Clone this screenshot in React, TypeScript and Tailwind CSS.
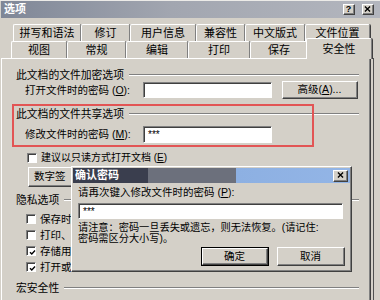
import React from 'react'

const tabsBack: [string, number][] = [
  ['拼写和语法', 68],
  ['修订', 49],
  ['用户信息', 66],
  ['兼容性', 49],
  ['中文版式', 60],
  ['文件位置', 65],
]

const tabsFront: [string, number][] = [
  ['视图', 56],
  ['常规', 59],
  ['编辑', 62],
  ['打印', 62],
  ['保存', 58],
  ['安全性', 62],
]

function Raised({ className = '', children }: { className?: string; children?: React.ReactNode }) {
  return (
    <div className={`border border-t-white border-l-white border-r-[#404040] border-b-[#404040] ${className}`}>
      <div className="h-full w-full border-r border-b border-[#808080] flex items-center justify-center">
        {children}
      </div>
    </div>
  )
}

function Sunken({ className = '', children }: { className?: string; children?: React.ReactNode }) {
  return (
    <div className={`border border-t-[#808080] border-l-[#808080] border-r-white border-b-white ${className}`}>
      <div className="h-full w-full border-t border-l border-[#404040] bg-white flex items-center pl-[3px] text-[10px] leading-none">
        {children}
      </div>
    </div>
  )
}

function CheckBox({ checked = false }: { checked?: boolean }) {
  return (
    <div className="w-[10px] h-[10px] shrink-0 border border-t-[#808080] border-l-[#808080] border-r-white border-b-white">
      <div className="h-full w-full border-t border-l border-[#404040] bg-white">
        {checked && (
          <svg viewBox="0 0 7 7" className="w-[7px] h-[7px] ml-[0.5px] mt-[0.5px]">
            <path d="M1 3.2 L2.8 5 L6 1.6" stroke="#000" strokeWidth="1.4" fill="none" />
          </svg>
        )}
      </div>
    </div>
  )
}

function Group({ title, className = '' }: { title: string; className?: string }) {
  return (
    <div className={`flex items-center h-[12px] ${className}`}>
      <span className="text-[10.8px] leading-none whitespace-nowrap">{title}</span>
      <div className="ml-[5px] flex-1 h-[2px] border-t border-t-[#808080] border-b border-b-white" />
    </div>
  )
}

function Tab({ label, width, selected = false }: { label: string; width: number; selected?: boolean }) {
  if (selected) {
    return (
      <div
        className="relative z-10 -mx-[2px] -mt-[3px] -mb-[1px] h-[21px] bg-[#d4d0c8] border-l border-t border-white rounded-t-[2px] border-r border-r-[#808080] shadow-[1px_0_0_#404040] flex items-center justify-center text-[11px] leading-none"
        style={{ width: width + 4 }}
      >
        {label}
      </div>
    )
  }
  return (
    <div
      className="h-[17px] border-l border-t border-white rounded-t-[2px] border-r border-r-[#808080] shadow-[1px_0_0_#404040] flex items-center justify-center text-[11px] leading-none pt-[1px]"
      style={{ width }}
    >
      {label}
    </div>
  )
}

// only the part left of the confirm dialog shows
function PrivacyRow({ label, checked = false }: { label: string; checked?: boolean }) {
  return (
    <div className="flex items-center h-[16px] pl-[10px]">
      <CheckBox checked={checked} />
      <span className="ml-[4px] text-[10.5px] leading-none whitespace-nowrap">{label}</span>
    </div>
  )
}

export default function App() {
  return (
    <div className="relative w-[380px] h-[300px] overflow-hidden bg-[#d4d0c8] text-black font-['Liberation_Sans','Noto_Sans_CJK_SC',sans-serif]">
      {/* title bar */}
      <div className="h-[1px] bg-[#ecebe8]" />
      <div className="ml-[1px] h-[17px] flex items-center justify-between pl-[3px] pr-[6px] bg-[linear-gradient(to_right,#7f8797,#a2a6b0_45%,#b3b6be)]">
        <span className="text-white text-[11px] font-bold leading-none">选项</span>
        <div className="flex gap-[7px]">
          <Raised className="w-[12px] h-[11px] bg-[#d4d0c8]">
            <span className="text-[9px] font-bold leading-none">?</span>
          </Raised>
          <Raised className="w-[12px] h-[11px] bg-[#d4d0c8]">
            <svg viewBox="0 0 8 7" className="w-[7px] h-[6px]">
              <path d="M1 0.5 L7 6.5 M7 0.5 L1 6.5" stroke="#000" strokeWidth="1.5" />
            </svg>
          </Raised>
        </div>
      </div>

      {/* tabs */}
      <div className="mt-[6px] flex pl-[13px]">
        {tabsBack.map(([l, w]) => (
          <Tab key={l} label={l} width={w} />
        ))}
      </div>
      <div className="flex pl-[11px]">
        {tabsFront.map(([l, w]) => (
          <Tab key={l} label={l} width={w} selected={l === '安全性'} />
        ))}
      </div>

      {/* panel */}
      <div className="ml-[1px] w-[369px] h-[260px] border-t border-l border-white border-r border-r-[#808080] shadow-[1px_0_0_#404040] pl-[14px] pr-[10px] pt-[10px]">
        <Group title="此文档的文件加密选项" />
        <div className="flex items-center h-[18px] pl-[9px]">
          <span className="w-[118px] text-[10.5px] leading-none whitespace-nowrap">打开文件时的密码 (<span className="underline">O</span>):</span>
          <Sunken className="w-[129px] h-[16px]" />
          <Raised className="ml-[10px] w-[76px] h-[18px]">
            <span className="text-[10.5px] leading-none">高级(<span className="underline">A</span>)...</span>
          </Raised>
        </div>

        <Group title="此文档的文件共享选项" className="mt-[9px]" />
        <div className="flex items-center h-[18px] mt-[5px] pl-[9px]">
          <span className="w-[118px] text-[10.5px] leading-none whitespace-nowrap">修改文件时的密码 (<span className="underline">M</span>):</span>
          <Sunken className="w-[129px] h-[17px]">***</Sunken>
        </div>

        <div className="flex items-center h-[14px] mt-[8px] pl-[11px]">
          <CheckBox />
          <span className="ml-[4px] text-[10px] leading-none whitespace-nowrap">建议以只读方式打开文档 (<span className="underline">E</span>)</span>
        </div>

        {/* digital signature button, its right part is under the dialog */}
        <div className="mt-[2px] ml-[12px] w-[45px] overflow-hidden">
          <Raised className="w-[86px] h-[20px]">
            <span className="text-[10.5px] leading-none w-full pl-[5px] whitespace-nowrap">数字签</span>
          </Raised>
        </div>

        <Group title="隐私选项" className="mt-[7px]" />
        <div className="mt-[5px]">
          <PrivacyRow label="保存时" />
          <PrivacyRow label="打印、" />
          <PrivacyRow label="存储用" checked />
          <PrivacyRow label="打开或" checked />
        </div>

        <Group title="宏安全性" className="mt-[7px]" />
      </div>

      {/* outer window edge on the right */}
      <div className="absolute top-[58px] left-[373px] w-[1px] h-[242px] bg-[#505050]" />

      {/* red annotation box */}
      <div className="absolute left-[12px] top-[104px] w-[302px] h-[43px] border-2 border-[#e25555]" />

      {/* confirm password dialog */}
      <div className="absolute left-[71px] top-[166px] w-[281px] h-[106px] bg-[#d4d0c8] border border-t-white border-l-white border-r-[#404040] border-b-[#404040] shadow-[inset_-1px_-1px_0_#808080] p-[1px]">
        <div className="h-[15px] flex items-center justify-between pl-[2px] pr-[2px] bg-[linear-gradient(to_right,#3a3e4e_0%,#3a3e4e_27%,#6c707c_27%,#6c707c_59%,#8db0e2_59%,#93b5e6_100%)]">
          <span className="text-white text-[11px] font-bold leading-none">确认密码</span>
          <Raised className="w-[15px] h-[12px] bg-[#d4d0c8]">
            <svg viewBox="0 0 8 7" className="w-[7px] h-[6px]">
              <path d="M1 0.5 L7 6.5 M7 0.5 L1 6.5" stroke="#000" strokeWidth="1.5" />
            </svg>
          </Raised>
        </div>
        <div className="pl-[5px] pr-[5px]">
          <div className="mt-[3px] h-[12px] flex items-center text-[10.5px] leading-none whitespace-nowrap">
            请再次键入修改文件时的密码 (<span className="underline">P</span>):
          </div>
          <Sunken className="mt-[5px] w-[265px] h-[16px]">***</Sunken>
          <div className="mt-[3px] text-[10.2px] leading-[11px] whitespace-nowrap">
            <div>请注意：密码一旦丢失或遗忘，则无法恢复。(请记住:</div>
            <div>密码需区分大小写)。</div>
          </div>
          <div className="mt-[3px] flex justify-end gap-[8px]">
            <div className="border border-black">
              <Raised className="w-[66px] h-[17px]">
                <span className="text-[10.5px] leading-none">确定</span>
              </Raised>
            </div>
            <Raised className="w-[68px] h-[19px]">
              <span className="text-[10.5px] leading-none">取消</span>
            </Raised>
          </div>
        </div>
      </div>
    </div>
  )
}
